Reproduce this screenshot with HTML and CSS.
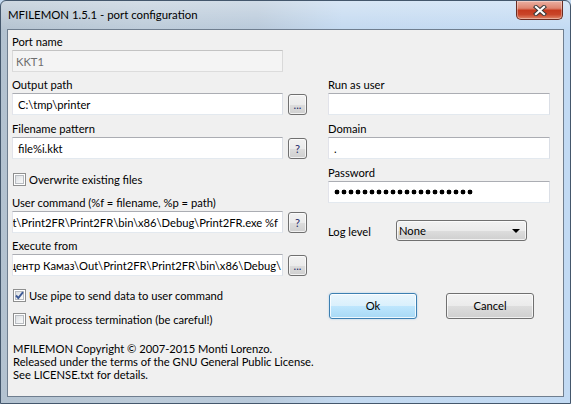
FILE: index.html
```html
<!DOCTYPE html>
<html>
<head>
<meta charset="utf-8">
<link rel="stylesheet" href="styles.css">
</head>
<body>
<div class="window">
  <div class="titlebar">
    <span class="title">MFILEMON 1.5.1 - port configuration</span>
    <div class="close">
      <svg width="14" height="11" viewBox="0 0 14 11">
        <path d="M3 2 L11 9 M11 2 L3 9" stroke="#3a3a3a" stroke-width="4.2" stroke-linecap="square" fill="none"/>
        <path d="M3 2 L11 9 M11 2 L3 9" stroke="#ffffff" stroke-width="2.2" stroke-linecap="square" fill="none"/>
      </svg>
    </div>
  </div>
  <div class="client">
    <div class="columns">
      <div class="col-left">
        <div class="lbl">Port name</div>
        <div class="edit disabled">KKT1</div>

        <div class="lbl mt5">Output path</div>
        <div class="row">
          <div class="edit">C:\tmp\printer</div>
          <div class="btn small">...</div>
        </div>

        <div class="lbl mt6">Filename pattern</div>
        <div class="row">
          <div class="edit">file%i.kkt</div>
          <div class="btn small">?</div>
        </div>

        <div class="check mt14"><span class="box"></span><span>Overwrite existing files</span></div>

        <div class="lbl mt9">User command (%f = filename, %p = path)</div>
        <div class="row">
          <div class="edit clip"><span>C:\Projects\Out\Print2FR\Print2FR\bin\x86\Debug\Print2FR.exe %f</span></div>
          <div class="btn small">?</div>
        </div>

        <div class="lbl mt5">Execute from</div>
        <div class="row">
          <div class="edit clip tight"><span>D:\Projects\Автоцентр Камаз\Out\Print2FR\Print2FR\bin\x86\Debug\</span></div>
          <div class="btn small">...</div>
        </div>

        <div class="check mt13"><span class="box checked"><svg width="11" height="11" viewBox="0 0 11 11"><path d="M2 5.5 L4.3 8 L9 2.2" stroke="#3d5a96" stroke-width="1.9" fill="none"/></svg></span><span>Use pipe to send data to user command</span></div>
        <div class="check mt11"><span class="box"></span><span>Wait process termination (be careful!)</span></div>

        <div class="copyright">
          <div>MFILEMON Copyright © 2007-2015 Monti Lorenzo.</div>
          <div>Released under the terms of the GNU General Public License.</div>
          <div>See LICENSE.txt for details.</div>
        </div>
      </div>

      <div class="col-right">
        <div class="lbl">Run as user</div>
        <div class="edit wide"></div>

        <div class="lbl mt6">Domain</div>
        <div class="edit wide">.</div>

        <div class="lbl mt6">Password</div>
        <div class="edit wide"><span class="dots"></span></div>

        <div class="logrow">
          <span class="loglbl">Log level</span>
          <div class="combo"><span>None</span><span class="arrow"></span></div>
        </div>

        <div class="buttons">
          <div class="btn big default">Ok</div>
          <div class="btn big">Cancel</div>
        </div>
      </div>
    </div>
  </div>
</div>
</body>
</html>
```

FILE: styles.css
```css
* { box-sizing: border-box; }
html, body { margin: 0; padding: 0; background: #c3d9f0; }
body {
  font-family: Lato, "Liberation Sans", sans-serif;
  font-size: 11.2px;
  color: #000;
}
.window {
  width: 571px;
  height: 404px;
  border: 1px solid #44576c;
  border-radius: 6px 6px 0 0;
  padding: 0 6px 6px 6px;
  background:
    linear-gradient(to bottom, rgba(255,255,255,0.35), rgba(255,255,255,0) 30px),
    linear-gradient(to right, #b3c2d0 0%, #bccbd9 25%, #b8c9da 45%, #c3d9f0 60%, #c2daf3 100%);
  display: flex;
  flex-direction: column;
}
.titlebar {
  height: 28px;
  display: flex;
  align-items: flex-start;
  padding-left: 1px;
}
.title {
  margin-top: 6px;
  line-height: 16px;
  font-size: 11.4px;
}
.close {
  margin-left: auto;
  margin-right: 1px;
  width: 47px;
  height: 19px;
  border: 1px solid #6a2c22;
  border-top: none;
  border-radius: 0 0 5px 5px;
  background: linear-gradient(to bottom, #eab0a2 0%, #de8570 40%, #c53a1e 52%, #c94529 75%, #e0876a 100%);
  display: flex;
  align-items: center;
  justify-content: center;
  box-shadow: inset 0 0 0 1px rgba(255,255,255,0.35);
}
.client {
  flex: 1;
  border: 1px solid #6f7e8f;
  background: #f0f0f0;
  padding: 4px 0 0 4px;
}
.columns {
  display: flex;
  gap: 21px;
}
.col-left { width: 295px; display: flex; flex-direction: column; }
.col-right { width: 222px; display: flex; flex-direction: column; margin-top: 43px; }

.lbl { height: 16px; line-height: 16px; white-space: nowrap; }
.mt5 { margin-top: 5px; }
.mt6 { margin-top: 6px; }
.mt9 { margin-top: 9px; }
.mt11 { margin-top: 11px; }
.mt13 { margin-top: 13px; }
.mt14 { margin-top: 14px; }

.row { display: flex; gap: 5px; align-items: flex-start; }

.edit {
  width: 271px;
  height: 22px;
  border: 1px solid;
  border-color: #abadb3 #dbdfe6 #e3e9ef #e2e3ea;
  background: #fff;
  padding: 0 4px 0 5px;
  display: flex;
  align-items: center;
  white-space: nowrap;
  overflow: hidden;
}
.edit.disabled {
  background: #f4f4f4;
  border-color: #c3c3c3 #d9d9d9 #dcdcdc #d9d9d9;
  color: #6d6d6d;
  padding-left: 3px;
}
.edit.clip { justify-content: flex-end; padding-right: 4px; }
.edit.clip.tight { padding-right: 1px; }
.edit.clip span { flex: none; }
.edit.wide { width: 222px; }

.dots {
  width: 140px;
  height: 8px;
  margin-left: 0;
  background-image: radial-gradient(circle at 3px 4px, #000 2.1px, transparent 2.7px);
  background-size: 7px 8px;
  background-repeat: repeat-x;
}

.btn {
  border: 1px solid #707070;
  border-radius: 3px;
  background: linear-gradient(to bottom, #f2f2f2 0%, #ebebeb 50%, #dddddd 51%, #cfcfcf 100%);
  box-shadow: inset 0 0 0 1px rgba(255,255,255,0.7);
  display: flex;
  align-items: center;
  justify-content: center;
  line-height: 14px;
}
.btn.small {
  width: 19px;
  height: 21px;
  margin-top: 1px;
  color: #1c2a6a;
}
.btn.big { width: 88px; height: 26px; }
.btn.default {
  border-color: #3c7fb1;
  background: linear-gradient(to bottom, #eaf6fd 0%, #d9f0fc 50%, #bee6fd 51%, #a7d9f5 100%);
  box-shadow: inset 0 0 0 1px rgba(255,255,255,0.8), 0 0 2px rgba(90,170,230,0.5);
}

.check { display: flex; align-items: center; gap: 3px; height: 13px; padding-left: 1px; white-space: nowrap; }
.box {
  width: 13px;
  height: 13px;
  border: 1px solid #8e8f8f;
  background: #fff;
  position: relative;
  flex: none;
  display: flex;
  align-items: center;
  justify-content: center;
}
.box::before {
  content: "";
  position: absolute;
  left: 1px; top: 1px; right: 1px; bottom: 1px;
  border: 1px solid #b8bcc1;
  background: linear-gradient(135deg, #dcdfe2 0%, #eef0f2 60%, #fafafa 100%);
}
.box svg { position: relative; }

.copyright {
  margin-top: 16px;
  line-height: 13px;
  padding-left: 1px;
  white-space: nowrap;
}
.copyright div { height: 13px; }

.logrow {
  margin-top: 17px;
  height: 21px;
  display: flex;
  align-items: center;
}
.loglbl { width: 68px; padding-top: 2px; }
.combo {
  width: 131px;
  height: 21px;
  border: 1px solid #707070;
  border-radius: 3px;
  background: linear-gradient(to bottom, #f2f2f2 0%, #ebebeb 50%, #dddddd 51%, #cfcfcf 100%);
  box-shadow: inset 0 0 0 1px rgba(255,255,255,0.7);
  display: flex;
  align-items: center;
  padding: 0 4px 0 2px;
}
.arrow {
  margin-left: auto;
  margin-right: 2px;
  width: 0; height: 0;
  border-left: 4px solid transparent;
  border-right: 4px solid transparent;
  border-top: 4px solid #000;
}
.buttons {
  margin-top: 52px;
  margin-left: 1px;
  display: flex;
  gap: 29px;
}
```
